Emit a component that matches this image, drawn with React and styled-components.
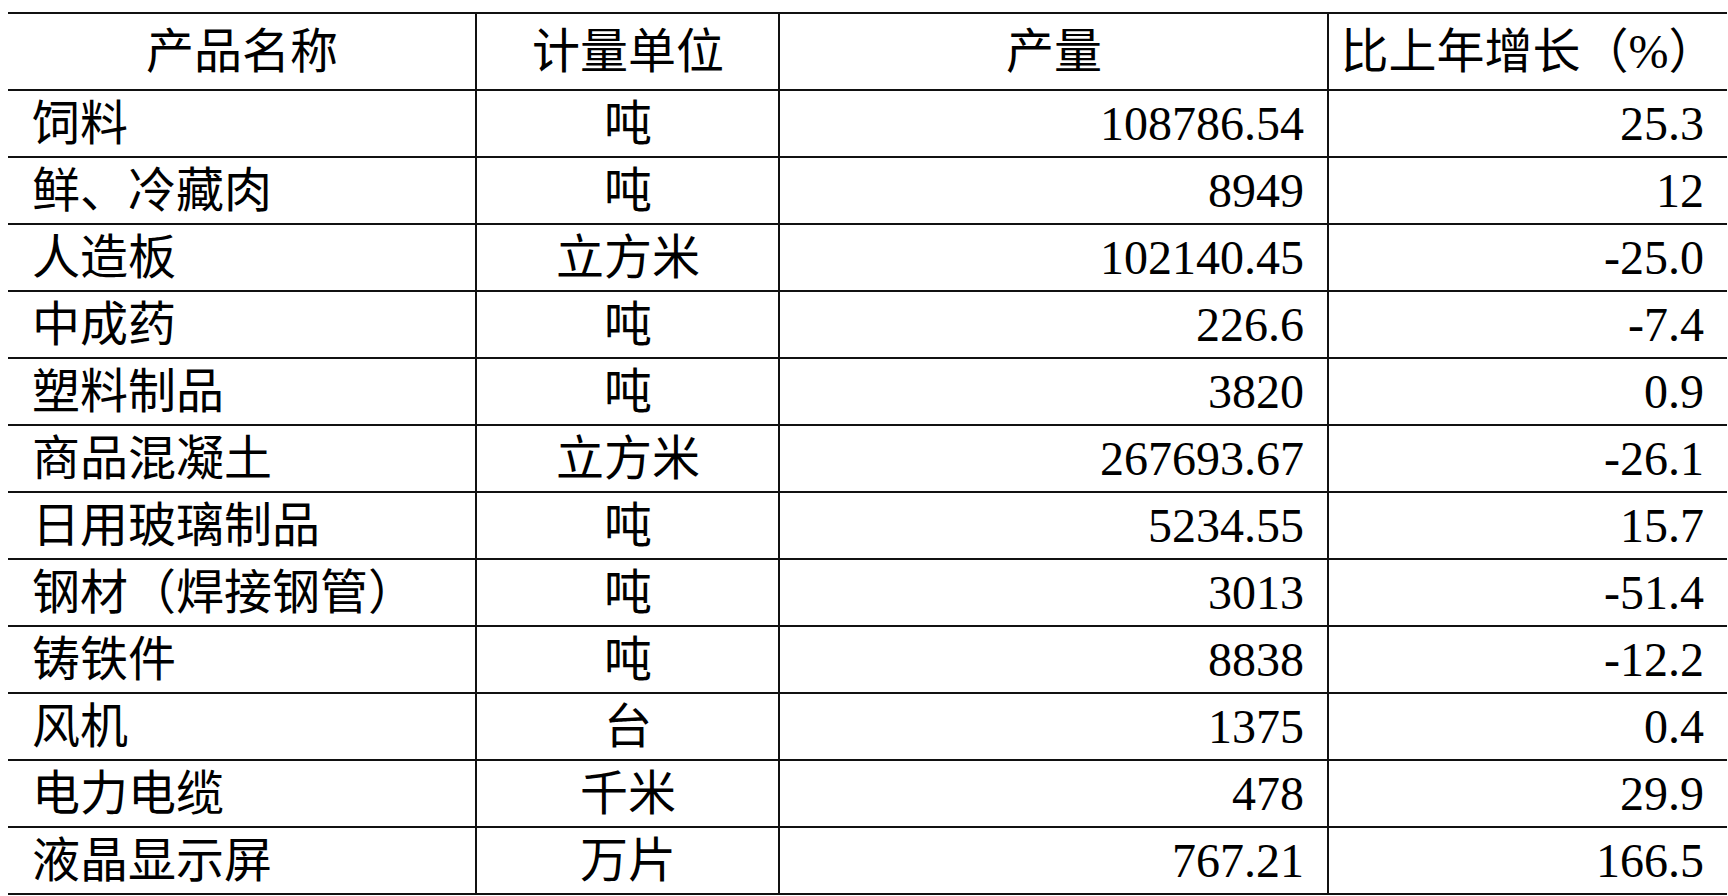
import React from 'react';
import styled, { createGlobalStyle } from 'styled-components';

//Table data
const columns = ['产品名称', '计量单位', '产量', '比上年增长（%）'];

const rows = [
  ['饲料', '吨', '108786.54', '25.3'],
  ['鲜、冷藏肉', '吨', '8949', '12'],
  ['人造板', '立方米', '102140.45', '-25.0'],
  ['中成药', '吨', '226.6', '-7.4'],
  ['塑料制品', '吨', '3820', '0.9'],
  ['商品混凝土', '立方米', '267693.67', '-26.1'],
  ['日用玻璃制品', '吨', '5234.55', '15.7'],
  ['钢材（焊接钢管）', '吨', '3013', '-51.4'],
  ['铸铁件', '吨', '8838', '-12.2'],
  ['风机', '台', '1375', '0.4'],
  ['电力电缆', '千米', '478', '29.9'],
  ['液晶显示屏', '万片', '767.21', '166.5'],
];

const aligns = ['left', 'center', 'right', 'right'];

//Export default component
export default function App() {
  return (
    <>
      <GlobalStyle />
      <SDPage>
        <SDTable>
          <SDRow $header>
            {columns.map((c, i) => (
              <SDCell key={c} $align="center" $last={i === columns.length - 1}>
                {c}
              </SDCell>
            ))}
          </SDRow>
          {rows.map((r) => (
            <SDRow key={r[0]}>
              {r.map((v, i) => (
                <SDCell key={i} $align={aligns[i]} $last={i === r.length - 1}>
                  {v}
                </SDCell>
              ))}
            </SDRow>
          ))}
        </SDTable>
      </SDPage>
    </>
  );
}

//Styled components
const GlobalStyle = createGlobalStyle`
  html, body {
    margin: 0;
    padding: 0;
    background: #ffffff;
  }
  body {
    font-family: "Liberation Serif", "Noto Sans CJK SC", serif;
    color: #000000;
  }
`;

const SDPage = styled.div`
  padding: 12px 1px 0 8px;
  height: 896px;
  box-sizing: border-box;
  overflow: hidden;
`;

const SDTable = styled.div`
  width: 1719px;
  border-top: 2px solid #111;
`;

const SDRow = styled.div`
  display: grid;
  grid-template-columns: 469px 303px 549px 398px;
  height: ${(p) => (p.$header ? '77px' : '67px')};
  box-sizing: border-box;
  border-bottom: 2px solid #111;
`;

const SDCell = styled.div`
  display: flex;
  align-items: center;
  justify-content: ${(p) =>
    p.$align === 'left' ? 'flex-start' : p.$align === 'right' ? 'flex-end' : 'center'};
  box-sizing: border-box;
  padding: 0 23px 0 24px;
  border-right: ${(p) => (p.$last ? 'none' : '2px solid #111')};
  font-size: 48px;
  line-height: 1;
  white-space: nowrap;
`;
